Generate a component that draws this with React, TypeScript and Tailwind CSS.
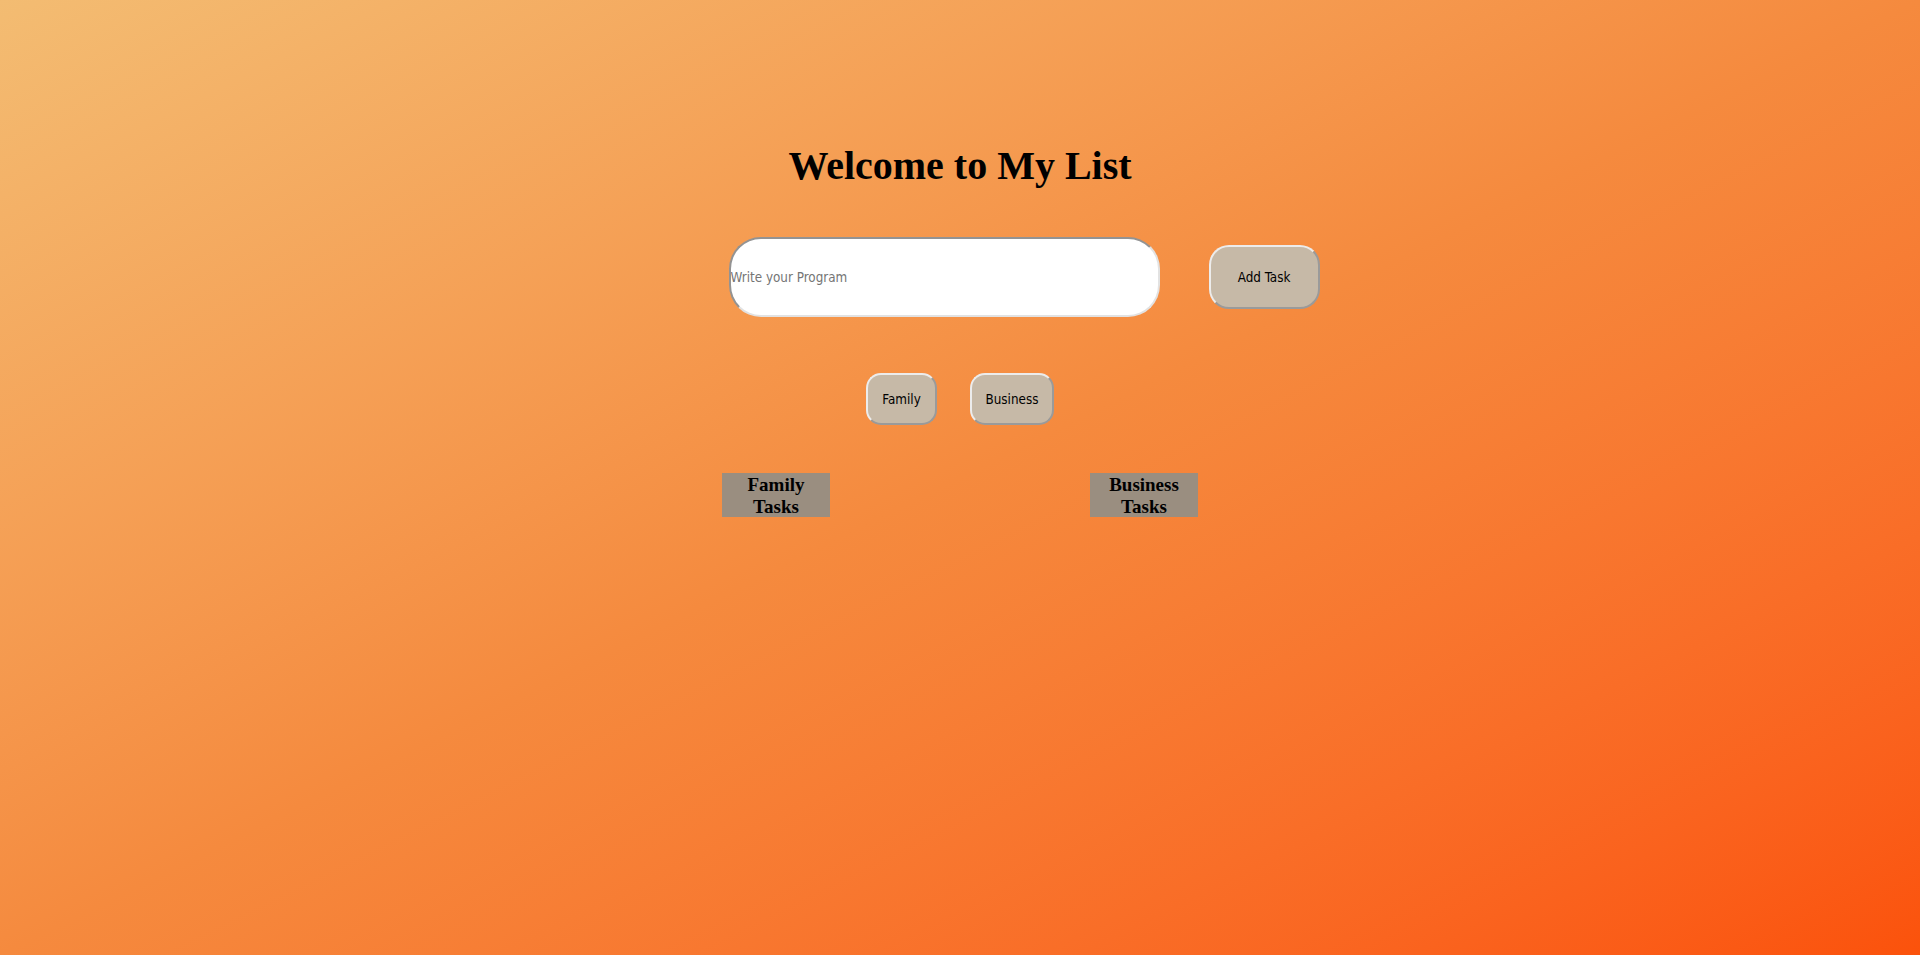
import React, { useState } from 'react';

const narrow = "font-['Liberation_Sans_Narrow','DejaVu_Sans_Condensed',sans-serif]";

const App: React.FC = () => {
  const [task, setTask] = useState('');

  return (
    <div className="min-h-screen w-full bg-gradient-to-br from-[#f3bc72] via-[#f58a3e] to-[#fb520b] font-['Liberation_Serif',serif] text-black">
      <div className="flex flex-col items-center pt-[143px]">
        <h1 className="text-[40px] leading-[46px] font-bold">Welcome to My List</h1>

        {/* input row */}
        <div className="mt-[48px] flex items-center justify-center gap-[49px] pl-[128px]">
          <input
            type="text"
            value={task}
            onChange={(e) => setTask(e.target.value)}
            placeholder="Write your Program"
            className={`${narrow} h-[80px] w-[431px] rounded-[32px] border-2 border-t-[#939393] border-l-[#939393] border-b-[#e2e2e2] border-r-[#e2e2e2] bg-white p-0 pt-[1px] text-[13.33px] text-black placeholder:text-[#757575] outline-none`}
          />
          <button
            className={`${narrow} h-[64px] w-[111px] rounded-[20px] border-2 border-t-[#ececec] border-l-[#ececec] border-b-[#9a9a9a] border-r-[#9a9a9a] bg-[#c6b9a7] pt-[1px] text-[13.33px] text-black`}
          >
            Add Task
          </button>
        </div>

        {/* category buttons */}
        <div className="mt-[56px] flex items-center justify-center gap-[33px]">
          <button
            className={`${narrow} h-[52px] w-[71px] rounded-[15px] border-2 border-t-[#ececec] border-l-[#ececec] border-b-[#9a9a9a] border-r-[#9a9a9a] bg-[#c6b9a7] pt-[1px] text-[13.33px] text-black`}
          >
            Family
          </button>
          <button
            className={`${narrow} h-[52px] w-[84px] rounded-[15px] border-2 border-t-[#ececec] border-l-[#ececec] border-b-[#9a9a9a] border-r-[#9a9a9a] bg-[#c6b9a7] pt-[1px] text-[13.33px] text-black`}
          >
            Business
          </button>
        </div>

        {/* task lists */}
        <div className="mt-[48px] flex items-start justify-center gap-[260px]">
          <div className="flex flex-col items-center">
            <h3 className="h-[44px] w-[108px] bg-[#9a8e80] px-[8px] pt-[1px] text-center text-[19px] leading-[22px] font-bold">
              Family Tasks
            </h3>
            <ul></ul>
          </div>
          <div className="flex flex-col items-center">
            <h3 className="h-[44px] w-[108px] bg-[#9a8e80] px-[8px] pt-[1px] text-center text-[19px] leading-[22px] font-bold">
              Business Tasks
            </h3>
            <ul></ul>
          </div>
        </div>
      </div>
    </div>
  );
};

export default App;
